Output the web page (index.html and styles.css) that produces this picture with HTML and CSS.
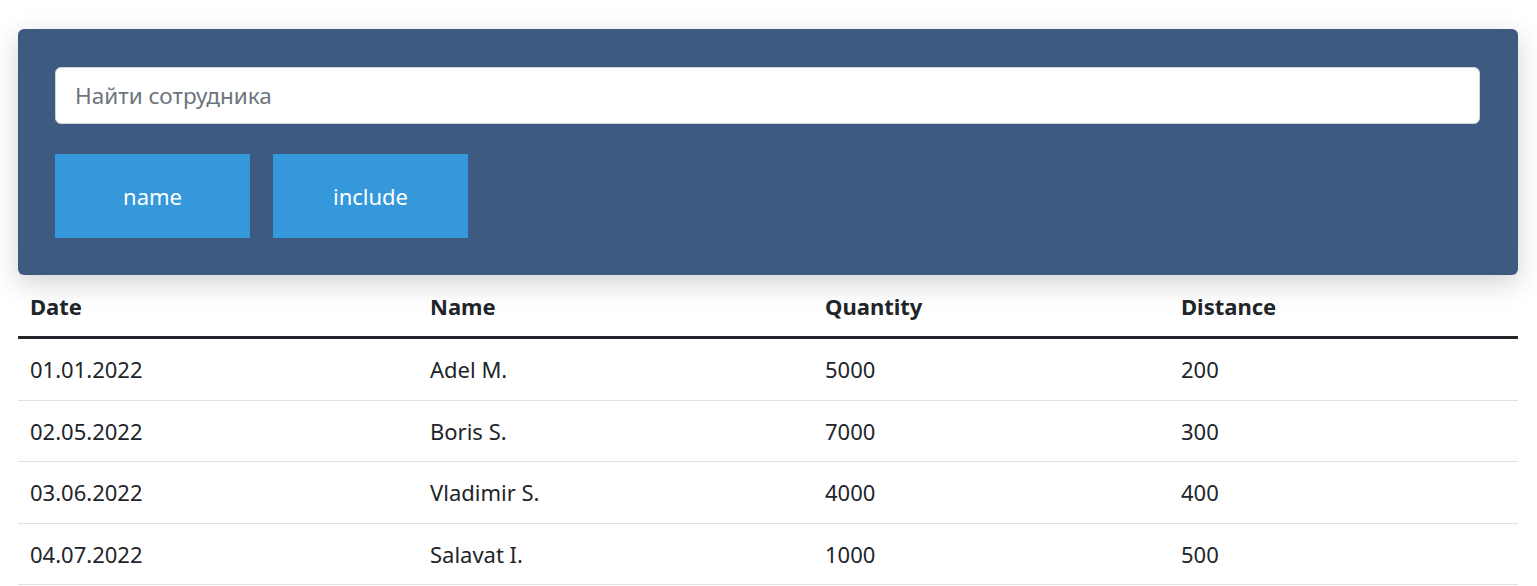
FILE: index.html
```html
<!DOCTYPE html>
<html lang="ru">
<head>
<meta charset="utf-8">
<title>Сотрудники</title>
<link rel="stylesheet" href="styles.css">
</head>
<body>
<div class="container">
  <div class="panel">
    <input class="search" type="text" placeholder="Найти сотрудника">
    <div class="buttons">
      <button class="btn">name</button>
      <button class="btn">include</button>
    </div>
  </div>
  <table class="table">
    <thead>
      <tr><th class="c1">Date</th><th class="c2">Name</th><th class="c3">Quantity</th><th>Distance</th></tr>
    </thead>
    <tbody>
      <tr><td>01.01.2022</td><td>Adel M.</td><td>5000</td><td>200</td></tr>
      <tr><td>02.05.2022</td><td>Boris S.</td><td>7000</td><td>300</td></tr>
      <tr><td>03.06.2022</td><td>Vladimir S.</td><td>4000</td><td>400</td></tr>
      <tr><td>04.07.2022</td><td>Salavat I.</td><td>1000</td><td>500</td></tr>
    </tbody>
  </table>
</div>
</body>
</html>
```

FILE: styles.css
```css
* { box-sizing: border-box; }
html, body { margin: 0; padding: 0; background: #fff; }
body {
  font-family: "Noto Sans", "Open Sans", sans-serif;
  font-size: 22px;
  line-height: 36px;
  color: #212529;
}
.container {
  padding: 29px 19px 0 18px;
}
.panel {
  background: #3d5a80;
  border-radius: 6px;
  padding: 38px 38px 37px 37px;
  box-shadow: 0 8px 28px rgba(0, 0, 0, 0.18);
  display: flex;
  flex-direction: column;
  gap: 30px;
}
.search {
  display: block;
  width: 100%;
  height: 57px;
  padding: 0 19px;
  font: inherit;
  font-size: 22.5px;
  color: #212529;
  background: #fff;
  border: 1.5px solid #ced4da;
  border-radius: 6px;
  outline: none;
}
.search::placeholder { color: #6c757d; }
.buttons { display: flex; gap: 23px; }
.btn {
  width: 195px;
  height: 84px;
  border: none;
  background: #3498db;
  color: #fff;
  font: inherit;
  padding: 0;
}
.table {
  width: 100%;
  border-collapse: collapse;
  table-layout: fixed;
}
.table th, .table td {
  text-align: left;
  padding: 12px 12px 12.5px;
  line-height: 36px;
  vertical-align: top;
}
.table th { font-weight: 700; padding-top: 13px; padding-bottom: 12px; border-bottom: 3px solid #212529; }
.table td { border-bottom: 1px solid #dee2e6; }
.c1 { width: 400px; }
.c2 { width: 395px; }
.c3 { width: 356px; }
```
